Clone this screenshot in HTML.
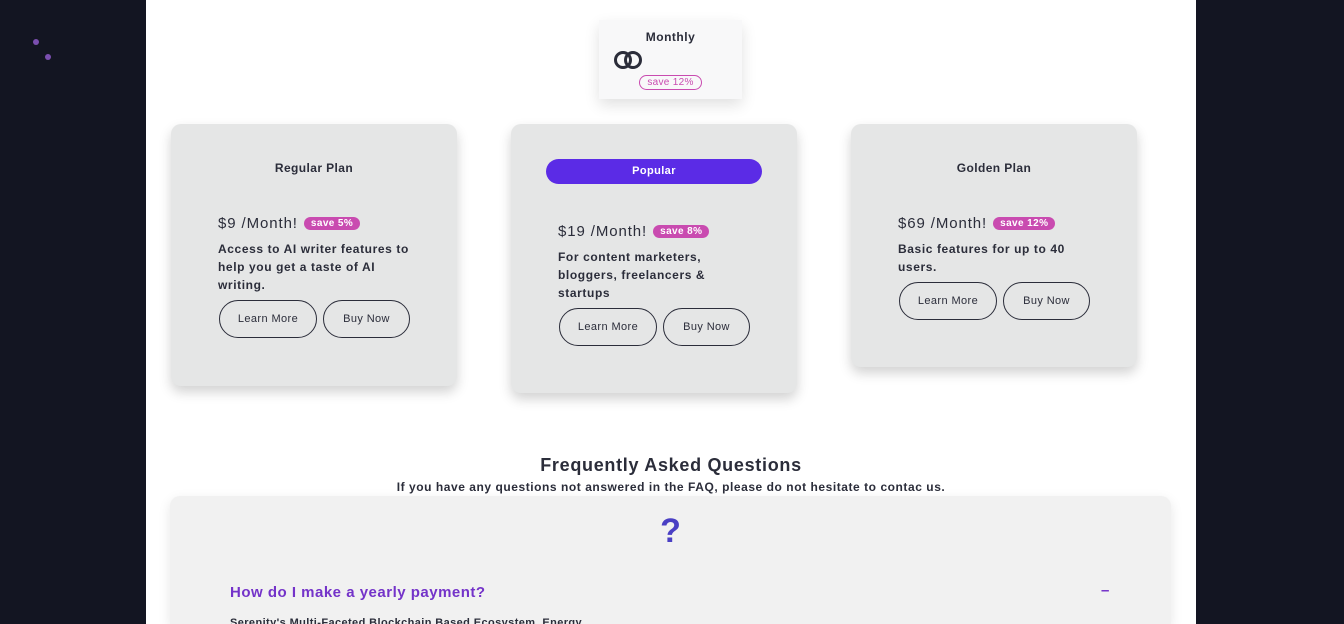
<!DOCTYPE html>
<html style="width:1344px;height:624px;overflow:hidden"><head><style>
*{margin:0;padding:0;box-sizing:border-box}
body{width:1344px;height:624px;background:#131522;position:relative;overflow:hidden;font-family:"Liberation Sans",sans-serif;color:#2b2d3a}
.main{position:absolute;left:146px;top:0;width:1050px;height:624px;background:#fff}
.dot{position:absolute;width:6px;height:6px;border-radius:50%;background:#7b4fb0}
.toggle{position:absolute;left:599px;top:20px;width:143px;height:79px;background:#f8f8f9;box-shadow:0 6px 14px rgba(0,0,0,.12)}
.card{position:absolute;width:286px;background:#e5e6e6;border-radius:10px;box-shadow:0 6px 12px rgba(0,0,0,.18)}
.abs{position:absolute}
.title{font-weight:bold;font-size:12px;text-align:center;width:100%;letter-spacing:.4px}
.price{font-size:15px;white-space:nowrap;letter-spacing:.9px}
.save{display:inline-block;background:#c94bb0;color:#fff;font-size:10px;border-radius:7px;padding:1px 7px;vertical-align:2px;margin-left:6px;font-weight:bold;letter-spacing:.4px}
.desc{font-size:12px;font-weight:bold;line-height:18px;width:195px;letter-spacing:.6px}
.btn{position:absolute;height:38px;border:1px solid #2b2d3a;border-radius:19px;font-size:11px;display:flex;align-items:center;justify-content:center;letter-spacing:.4px}
</style></head><body>
<div class="dot" style="left:33px;top:39px"></div>
<div class="dot" style="left:45px;top:54px"></div>
<div class="main"></div>
<div class="toggle">
 <div class="abs" style="left:0;top:10px;width:143px;text-align:center;font-weight:bold;font-size:12px;letter-spacing:.5px">Monthly</div>
 <div class="abs" style="left:15px;top:31px;width:18px;height:18px;border:3px solid #2b2d3a;border-radius:50%"></div>
 <div class="abs" style="left:25px;top:31px;width:18px;height:18px;border:3px solid #2b2d3a;border-radius:50%"></div>
 <div class="abs" style="left:40px;top:55px;width:63px;height:15px;border:1px solid #c94bb0;border-radius:8px;color:#c94bb0;font-size:10px;text-align:center;line-height:13px;letter-spacing:.3px">save 12%</div>
</div>

<div class="card" style="left:171px;top:124px;height:262px">
 <div class="abs title" style="top:37px">Regular Plan</div>
 <div class="abs price" style="left:47px;top:91px">$9 /Month!<span class="save">save 5%</span></div>
 <div class="abs desc" style="left:47px;top:116px">Access to AI writer features to help you get a taste of AI writing.</div>
 <div class="btn" style="left:48px;top:176px;width:98px">Learn More</div>
 <div class="btn" style="left:152px;top:176px;width:87px">Buy Now</div>
</div>
<div class="card" style="left:511px;top:124px;height:269px">
 <div class="abs" style="left:35px;top:35px;width:216px;height:25px;border-radius:13px;background:#5b2be6;color:#fff;font-weight:bold;font-size:11px;text-align:center;line-height:25px;letter-spacing:.4px">Popular</div>
 <div class="abs price" style="left:47px;top:99px">$19 /Month!<span class="save">save 8%</span></div>
 <div class="abs desc" style="left:47px;top:124px;width:160px">For content marketers, bloggers, freelancers &amp; startups</div>
 <div class="btn" style="left:48px;top:184px;width:98px">Learn More</div>
 <div class="btn" style="left:152px;top:184px;width:87px">Buy Now</div>
</div>
<div class="card" style="left:851px;top:124px;height:243px">
 <div class="abs title" style="top:37px">Golden Plan</div>
 <div class="abs price" style="left:47px;top:91px">$69 /Month!<span class="save">save 12%</span></div>
 <div class="abs desc" style="left:47px;top:116px;width:185px">Basic features for up to 40 users.</div>
 <div class="btn" style="left:48px;top:158px;width:98px">Learn More</div>
 <div class="btn" style="left:152px;top:158px;width:87px">Buy Now</div>
</div>

<div class="abs" style="left:146px;top:455px;width:1050px;text-align:center;font-weight:bold;font-size:18px;letter-spacing:.7px">Frequently Asked Questions</div>
<div class="abs" style="left:146px;top:480px;width:1050px;text-align:center;font-weight:bold;font-size:12px;letter-spacing:.55px">If you have any questions not answered in the FAQ, please do not hesitate to contac us.</div>
<div class="abs" style="left:170px;top:496px;width:1001px;height:128px;background:#f1f1f1;border-radius:10px 10px 0 0;box-shadow:0 4px 12px rgba(0,0,0,.1);overflow:hidden">
 <div class="abs" style="left:0;top:16px;width:1001px;text-align:center;font-size:34px;font-weight:bold;color:#4a3fc4">?</div>
 <div class="abs" style="left:60px;top:88px;font-size:15px;font-weight:bold;color:#7433c9;letter-spacing:.5px">How do I make a yearly payment?</div>
 <div class="abs" style="left:931px;top:86px;font-size:15px;font-weight:bold;color:#7433c9">–</div>
 <div class="abs" style="left:60px;top:121px;font-size:11px;font-weight:bold;letter-spacing:.4px">Serenity's Multi-Faceted Blockchain Based Ecosystem, Energy</div>
</div>
</body></html>
